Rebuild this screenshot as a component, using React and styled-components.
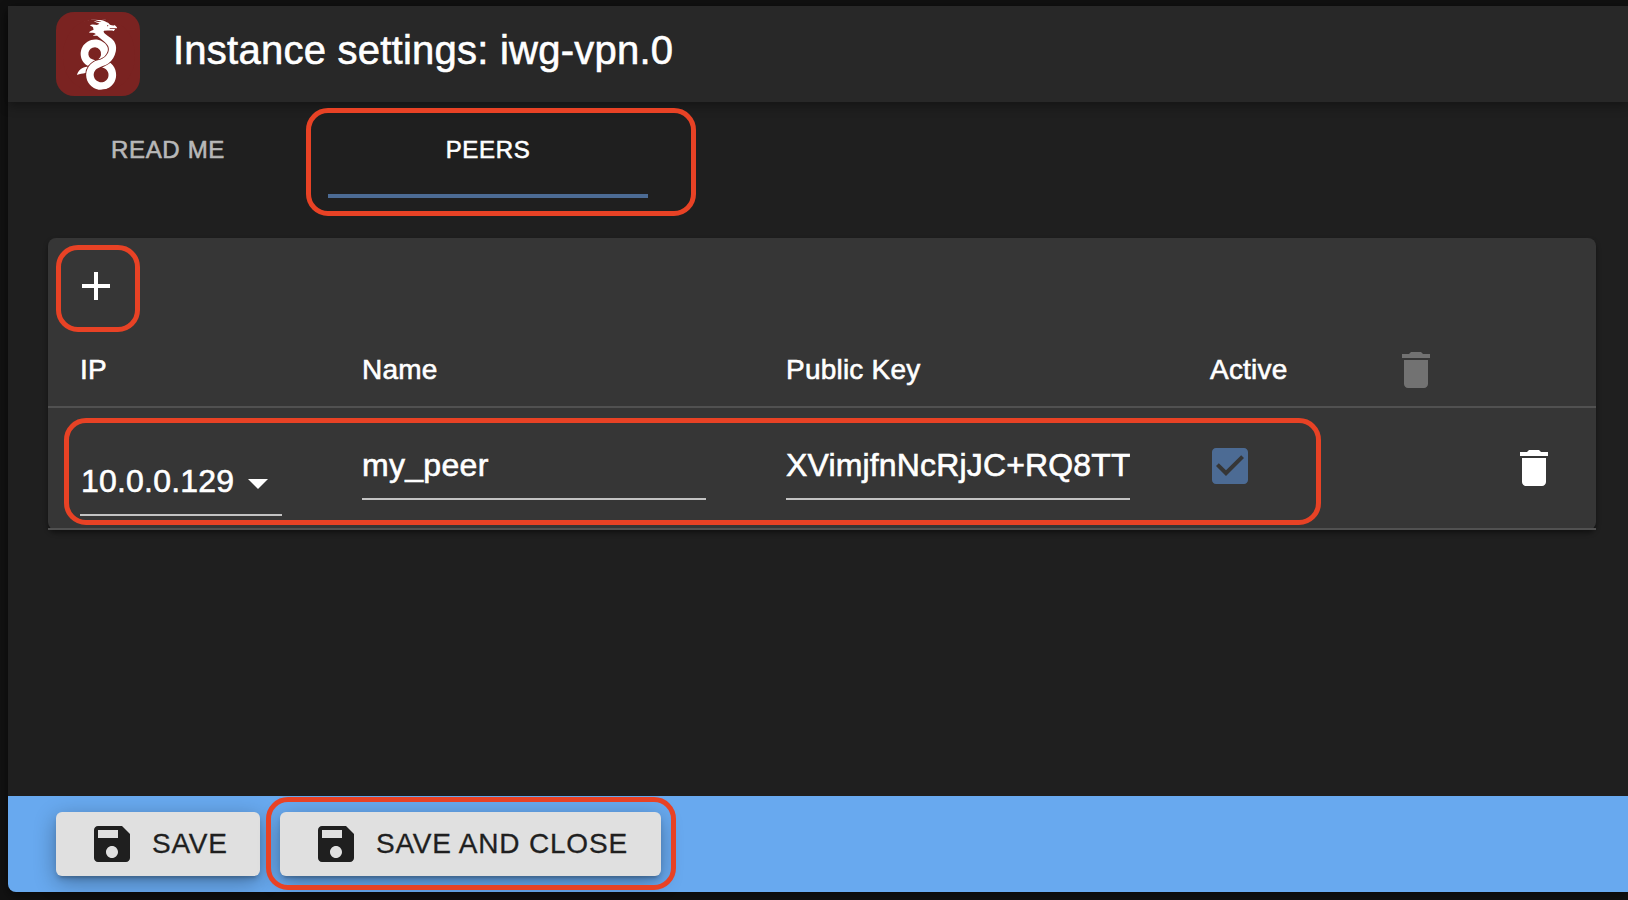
import React from 'react';
import styled, { createGlobalStyle } from 'styled-components';
import { SiWireguard } from 'react-icons/si';

const GlobalStyle = createGlobalStyle`
  * { box-sizing: border-box; }
  body { margin: 0; background: #121212; overflow: hidden; }
`;

const Page = styled.div`
  width: 100%;
  height: 900px;
  padding: 6px 0 8px 8px;
  font-family: 'Liberation Sans', sans-serif;
  color: #fff;
  background: #121212;
  -webkit-text-stroke: 0.6px currentColor;
`;

const Dialog = styled.div`
  display: flex;
  flex-direction: column;
  height: 886px;
  background: #1f1f1f;
  border-radius: 0 0 0 8px;
  box-shadow: 0 4px 12px rgba(0, 0, 0, 0.5);
`;

const Header = styled.header`
  display: flex;
  align-items: flex-start;
  height: 96px;
  padding: 6px 48px;
  background: #282828;
  box-shadow: 0 4px 10px rgba(0, 0, 0, 0.35);
  z-index: 1;
`;

const Logo = styled.div`
  display: grid;
  place-items: center;
  width: 84px;
  height: 84px;
  border-radius: 18px;
  background: #7a2321;
  color: #7a2321;
`;

/* White backing that shows through the dragon cut-out of the icon. */
const Disc = styled.div`
  display: grid;
  place-items: center;
  width: 71px;
  height: 71px;
  border-radius: 50%;
  background: linear-gradient(90deg, transparent 12px, #fff 12px 57px, transparent 57px);

  svg {
    flex: none;
    overflow: visible;
  }
`;

const Title = styled.h1`
  margin: 0 0 0 33px;
  font-size: 40px;
  font-weight: 400;
  line-height: 64px;
  letter-spacing: 0.24px;
  white-space: nowrap;
  padding-top: 6px;
`;

const Tabs = styled.nav`
  display: flex;
  height: 96px;
`;

const Tab = styled.button`
  position: relative;
  width: 320px;
  height: 96px;
  padding: 4px 0 0;
  border: 0;
  border-bottom: 4px solid ${(p) => (p.$active ? '#4c6b94' : 'transparent')};
  background: none;
  font: 24px 'Liberation Sans', sans-serif;
  letter-spacing: 0.67px;
  color: ${(p) => (p.$active ? '#fff' : '#b8b8b8')};
`;

const Content = styled.main`
  flex: 1;
  padding: 40px 32px 0 40px;
`;

const Paper = styled.section`
  height: 292px;
  border-radius: 8px;
  background: #363636;
  box-shadow: 0 3px 5px rgba(0, 0, 0, 0.45);
`;

const Toolbar = styled.div`
  position: relative;
  display: flex;
  height: 96px;
  padding: 24px;
`;

const Row = styled.div`
  position: relative;
  display: grid;
  grid-template-columns: 282px 424px 424px 182px 118px 1fr;
  height: ${(p) => p.$height}px;
  padding-left: 32px;
  border-bottom: 2px solid #515151;
`;

const HeadCell = styled.div`
  padding-top: ${(p) => (p.$icon ? 12 : 20)}px;
  font-size: 28px;
  line-height: 32px;
  letter-spacing: 0.22px;
`;

const Cell = styled.div`
  padding-top: ${(p) => p.$top || 0}px;
  margin-left: ${(p) => p.$shift || 0}px;
`;

const Field = styled.div`
  display: flex;
  align-items: center;
  width: ${(p) => p.$width}px;
  height: 60px;
  padding-bottom: 4px;
  border-bottom: 2px solid #c3c3c3;
`;

const Value = styled.span`
  padding: 0 0 4px ${(p) => p.$indent || 0}px;
  overflow: hidden;
  white-space: nowrap;
  font-size: 32px;
  letter-spacing: ${(p) => p.$spacing || 0}px;
`;

const Icon = styled.svg`
  display: block;
  flex: none;
  width: 48px;
  height: 48px;
  fill: ${(p) => p.$color || '#fff'};
`;

const Footer = styled.footer`
  display: flex;
  gap: 20px;
  height: 96px;
  padding: 16px 48px;
  background: #68a9ef;
  border-radius: 0 0 0 8px;
`;

const Action = styled.button`
  position: relative;
  display: flex;
  align-items: center;
  gap: 16px;
  width: ${(p) => p.$width}px;
  height: 64px;
  padding: 0 32px;
  border: 0;
  border-radius: 6px;
  background: #e0e0e0;
  color: #1f1f1f;
  font: 28px 'Liberation Sans', sans-serif;
  letter-spacing: 0.8px;
  white-space: nowrap;
  -webkit-text-stroke-width: 0.3px;
  box-shadow: 0 6px 2px -4px rgba(0, 0, 0, 0.12), 0 4px 4px rgba(0, 0, 0, 0.1), 0 6px 22px rgba(0, 0, 0, 0.32);
`;

const Highlight = styled.span`
  position: absolute;
  top: ${(p) => p.$top}px;
  left: ${(p) => p.$left}px;
  width: ${(p) => p.$width}px;
  height: ${(p) => p.$height}px;
  border: 5px solid #e84225;
  border-radius: 22px;
  pointer-events: none;
  z-index: 2;
`;

const paths = {
  add: 'M19 13h-6v6h-2v-6H5v-2h6V5h2v6h6v2z',
  trash: 'M6 19c0 1.1.9 2 2 2h8c1.1 0 2-.9 2-2V7H6v12zM19 4h-3.5l-1-1h-5l-1 1H5v2h14V4z',
  arrow: 'M7 10l5 5 5-5z',
  check: 'M19 3H5c-1.11 0-2 .9-2 2v14c0 1.1.89 2 2 2h14c1.11 0 2-.9 2-2V5c0-1.1-.89-2-2-2zm-9 14l-5-5 1.41-1.41L10 14.17l7.59-7.59L19 8l-9 9z',
  save: 'M17 3H5c-1.11 0-2 .9-2 2v14c0 1.1.89 2 2 2h14c1.1 0 2-.9 2-2V7l-4-4zm-5 16c-1.66 0-3-1.34-3-3s1.34-3 3-3 3 1.34 3 3-1.34 3-3 3zm3-10H5V5h10v4z',
};

const Glyph = ({ name, color }) => (
  <Icon viewBox="0 0 24 24" $color={color}>
    <path d={paths[name]} />
  </Icon>
);

export default function App() {
  return (
    <Page>
      <GlobalStyle />
      <Dialog>
        <Header>
          <Logo>
            <Disc><SiWireguard size={72} /></Disc>
          </Logo>
          <Title>Instance settings: iwg-vpn.0</Title>
        </Header>
        <Tabs>
          <Tab>READ ME</Tab>
          <Tab $active>
            PEERS
            <Highlight $top={6} $left={-22} $width={390} $height={108} />
          </Tab>
        </Tabs>
        <Content>
          <Paper>
            <Toolbar>
              <Glyph name="add" />
              <Highlight $top={7} $left={8} $width={84} $height={87} />
            </Toolbar>
            <Row $height={74}>
              <HeadCell>IP</HeadCell>
              <HeadCell>Name</HeadCell>
              <HeadCell>Public Key</HeadCell>
              <HeadCell>Active</HeadCell>
              <HeadCell $icon><Glyph name="trash" color="#727272" /></HeadCell>
            </Row>
            <Row $height={122}>
              <Cell $top={48}>
                <Field $width={202}>
                  <Value $spacing={0.2} $indent={1}>10.0.0.129</Value>
                  <Glyph name="arrow" />
                </Field>
              </Cell>
              <Cell $top={32}>
                <Field $width={344}><Value $spacing={0.3}>my_peer</Value></Field>
              </Cell>
              <Cell $top={32}>
                <Field $width={344}><Value $spacing={0.16}>XVimjfnNcRjJC+RQ8TT</Value></Field>
              </Cell>
              <Cell $top={34} $shift={-4}><Glyph name="check" color="#4c6b94" /></Cell>
              <Cell />
              <Cell $top={36}><Glyph name="trash" /></Cell>
              <Highlight $top={10} $left={16} $width={1257} $height={107} />
            </Row>
          </Paper>
        </Content>
        <Footer>
          <Action $width={204}><Glyph name="save" color="#1f1f1f" />SAVE</Action>
          <Action $width={381}>
            <Glyph name="save" color="#1f1f1f" />SAVE AND CLOSE
            <Highlight $top={-15} $left={-14} $width={410} $height={93} />
          </Action>
        </Footer>
      </Dialog>
    </Page>
  );
}
